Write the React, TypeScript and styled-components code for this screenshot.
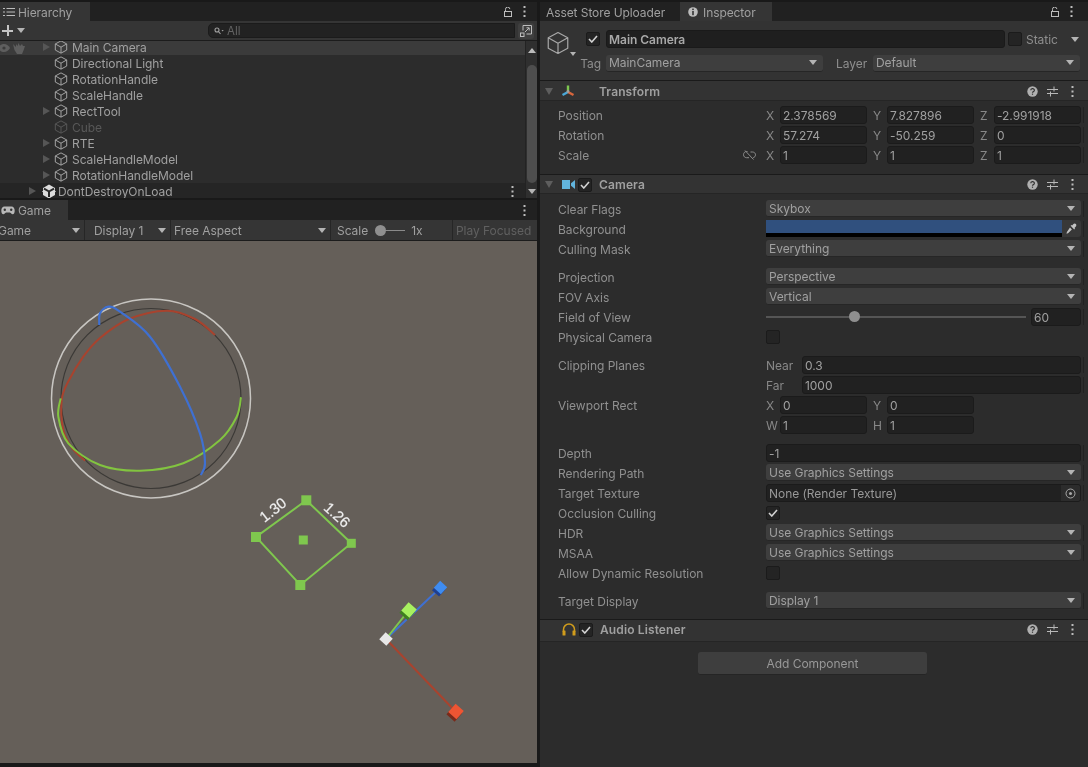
import React from 'react';
import styled, { createGlobalStyle } from 'styled-components';

const Global = createGlobalStyle`
  html, body { margin: 0; padding: 0; background: #191919; overflow: hidden; }
  * { box-sizing: border-box; }
`;

const Page = styled.div`
  width: 1088px; height: 767px; display: flex; background: #191919; filter: blur(0.3px);
  font-family: Inter, "Noto Sans", sans-serif; font-size: 12px; letter-spacing: -0.04px; color: #a0a0a0; overflow: hidden;
`;
const LeftCol = styled.div`width: 537px; height: 763px; margin-right: 3px; display: flex; flex-direction: column; flex: none;`;
const RightCol = styled.div`flex: 1; display: flex; flex-direction: column; min-width: 0;`;

const TabBar = styled.div<{ $first?: boolean }>`
  height: ${p => (p.$first ? 21 : 20)}px; background: #212121; display: flex; align-items: stretch; flex: none;
  ${p => p.$first && 'border-top: 2px solid #191919;'}
`;
const Tab = styled.div<{ $w: number; $on?: boolean; $pad?: number; $gap?: number }>`
  width: ${p => p.$w}px; padding: 1px 0 0 ${p => p.$pad ?? 3}px; display: flex; align-items: center; gap: ${p => p.$gap ?? 3}px;
  background: ${p => (p.$on ? '#353535' : 'transparent')};
  color: #a0a0a0; letter-spacing: -0.08px;
`;
const TabFill = styled.div`flex: 1;`;
const TabIcons = styled.div<{ $pad: number }>`display: flex; align-items: center; gap: 11px; padding-right: ${p => p.$pad}px;`;

const HierToolbar = styled.div`
  height: 20px; background: #353535; border-bottom: 1px solid #1c1c1c; display: flex; align-items: center; padding: 0 2px 0 2px; flex: none;
`;
const Plus = styled.span`width: 11px; height: 11px; margin-right: 4px; display: block; position: relative; flex: none;
  &::before { content: ''; position: absolute; left: 0; right: 0; top: 4.5px; height: 2px; background: #c4c4c4; }
  &::after { content: ''; position: absolute; top: 0; bottom: 0; left: 4.5px; width: 2px; background: #c4c4c4; }
`;
const Caret = styled.span<{ $c?: string; $w?: number }>`
  display: block; flex: none; width: 0; height: 0;
  border-left: ${p => p.$w ?? 4}px solid transparent; border-right: ${p => p.$w ?? 4}px solid transparent;
  border-top: ${p => (p.$w ?? 4) + 1}px solid ${p => p.$c ?? '#b4b4b4'};
`;
const SearchBox = styled.div`
  margin-left: 183px; width: 307px; height: 15px; background: #222222; border-radius: 5px 0 0 5px; border: 1px solid #1b1b1b;
  display: flex; align-items: center; padding-left: 5px; gap: 3px; color: #646464; font-size: 11.5px;
`;
const MaxBtn = styled.div`width: 16px; height: 16px; margin-left: 3px; background: #3f3f3f; border-radius: 3px; display: flex; align-items: center; justify-content: center;`;

const HierBody = styled.div`height: 157px; flex: none; display: flex; background: #2c2c2c; overflow: hidden;`;
const HierList = styled.div`flex: 1; display: flex; flex-direction: column; min-width: 0;`;
const HRow = styled.div<{ $sel?: boolean; $scene?: boolean; $h?: number }>`
  height: ${p => p.$h ?? 16}px; flex: none; display: flex; align-items: flex-end; padding-left: ${p => (p.$scene ? 29 : 43)}px;
  background: ${p => (p.$sel ? '#3b3b3b' : p.$scene ? '#252525' : 'transparent')};
  position: relative; color: #a0a0a0;
`;
const HInner = styled.div<{ $dim?: boolean }>`height: 16px; flex: 1; flex-shrink: 0; display: flex; align-items: center; ${p => p.$dim && 'color:#585858;'}`;
const FoldBox = styled.span<{ $w?: number }>`width: ${p => p.$w ?? 11}px; height: 16px; flex: none; display: flex; align-items: center;`;
const FoldTri = styled.span`width: 0; height: 0; border-top: 4.5px solid transparent; border-bottom: 4.5px solid transparent; border-left: 7px solid #565656;`;
const HIcon = styled.span<{ $w?: number }>`width: ${p => p.$w ?? 18}px; height: 16px; flex: none; display: flex; align-items: center;`;
const GutterIcons = styled.div`position: absolute; left: -2px; top: 0; height: 14px; display: flex; align-items: center; gap: 3px;`;
const RowDots = styled.div`margin-left: auto; margin-right: 11px; display: flex; align-items: center;`;
const ScrollBar = styled.div`width: 12px; flex: none; background: #2f2f2f; border-left: 1px solid #232323; display: flex; flex-direction: column; align-items: center; padding: 7px 0 4px 1px;`;
const Thumb = styled.div`width: 10px; flex: 1; margin: 12px 0 6px; background: #4e4e4e; border-radius: 5px;`;
const UpTri = styled.span`width: 0; height: 0; border-left: 4px solid transparent; border-right: 4px solid transparent; border-bottom: 5px solid #bcbcbc;`;
const Divider = styled.div`height: 2px; background: #191919; flex: none;`;

const GameToolbar = styled.div`height: 21px; flex: none; background: #353535; border-bottom: 1px solid #1c1c1c; display: flex; align-items: stretch; overflow: hidden;`;
const GameSeg = styled.div<{ $w: number; $pad?: number; $dim?: boolean; $last?: boolean }>`
  width: ${p => p.$w}px; flex: none; display: flex; align-items: center; padding: 0 4px 0 ${p => p.$pad ?? 4}px;
  ${p => !p.$last && 'border-right: 1px solid #262626;'} justify-content: space-between; white-space: nowrap;
  color: ${p => (p.$dim ? '#606060' : '#a0a0a0')};
`;
const GameClip = styled.span`margin-left: -2px;`;
const ScaleTrack = styled.span`width: 30px; height: 1px; background: #8a8a8a; margin: 0 6px 0 7px; position: relative; flex: none;`;
const ScaleKnob = styled.span`position: absolute; left: 0; top: -5px; width: 11px; height: 11px; border-radius: 50%; background: #8f8f8f;`;
const ScaleWrap = styled.div`display: flex; align-items: center;`;
const Viewport = styled.div`flex: 1; background: #655f59; min-height: 0; overflow: hidden;`;
const GizmoSvg = styled.svg`display: block; width: 537px; height: 522px;`;
const SvgLabel = styled.text`font-family: "Liberation Sans", sans-serif; font-size: 15px; letter-spacing: 0; fill: #f0f0f0; paint-order: stroke; stroke: rgba(240,240,240,0.45); stroke-width: 0.5px;`;

const InspectorBody = styled.div`flex: 1; background: #2c2c2c; display: flex; flex-direction: column; min-height: 0;`;
const ObjHeader = styled.div`
  background: #333333; height: 59px; padding-top: 9px; display: grid; grid-template-columns: 66px 1fr; grid-template-rows: 18px 17px; row-gap: 7px; align-items: center; flex: none;
`;
const BigIcon = styled.div`grid-column: 1; grid-row: 1 / span 2; align-self: start; margin: 1px 0 0 6px; position: relative; width: 28px; height: 28px;`;
const BigCaret = styled.span`position: absolute; left: 24px; top: 21px;`;
const HeadCell = styled.div<{ $row: number; $pr?: number }>`grid-column: 1; grid-row: ${p => p.$row}; display: flex; align-items: center; justify-content: flex-end; padding-right: ${p => p.$pr ?? 0}px; color: #8e8e8e;`;
const HeadFields = styled.div<{ $row: number }>`display: flex; align-items: center; grid-column: 2; grid-row: ${p => p.$row};`;
const NameField = styled.div`width: 399px; height: 18px; background: #1f1f1f; border: 1px solid #1a1a1a; border-radius: 3px; color: #a8a8a8; font-weight: 600; padding-left: 2px; display: flex; align-items: center;`;
const Check = styled.span<{ $ml?: number; $mr?: number }>`
  width: 14px; height: 14px; flex: none; border-radius: 2px; background: #242424; border: 1px solid #1b1b1b;
  display: flex; align-items: center; justify-content: center; margin-left: ${p => p.$ml ?? 0}px; margin-right: ${p => p.$mr ?? 0}px;
`;
const StaticLabel = styled.span`margin-left: 4px; width: 45px; color: #8e8e8e;`;
const Select = styled.div<{ $w?: number; $flex?: boolean }>`
  ${p => (p.$w ? `width:${p.$w}px;` : '')} ${p => (p.$flex ? 'flex:1;' : '')}
  height: 17px; margin-bottom: 1px; background: #3e3e3e; border-radius: 3px; border-bottom: 1px solid #262626; display: flex; align-items: center; justify-content: space-between;
  padding: 0 6px 0 3px; color: #a0a0a0; min-width: 0;
`;
const LayerLabel = styled.span`margin: 0 3px 0 13px; width: 34px; color: #8e8e8e;`;

const CompHeader = styled.div<{ $h?: number; $pt?: number; $pb?: number }>`
  height: ${p => p.$h ?? 21}px; flex: none; background: #333333; border-top: 1px solid #1a1a1a; border-bottom: 1px solid #252525; display: flex; align-items: center; padding: ${p => p.$pt ?? 0}px 14px ${p => p.$pb ?? 0}px 5px;
`;
const CompFold = styled.span`width: 0; height: 0; border-left: 4.5px solid transparent; border-right: 4.5px solid transparent; border-top: 7px solid #5e5e5e; margin-right: 9px; flex: none;`;
const FoldGap = styled.span`width: 18px; flex: none;`;
const CompIcon = styled.span`width: 14px; height: 14px; flex: none; display: flex; align-items: center; justify-content: center; margin-right: -2px; margin-left: -1px;`;
const CompSpacer = styled.span`width: 14px; flex: none; margin: 0 7px 0 5px;`;
const CompCheckWrap = styled.span`margin: 0 7px 0 5px; flex: none;`;
const CompTitle = styled.span`font-weight: 600; color: #a0a0a0; flex: 1; letter-spacing: 0.12px;`;
const CompTools = styled.span`display: flex; align-items: center; gap: 9px;`;
const ToolSlider = styled.span`display: flex; margin-right: 4px;`;

const Section = styled.div<{ $pt?: number; $pb?: number }>`padding: ${p => p.$pt ?? 5}px 0 ${p => p.$pb ?? 8}px; flex: none;`;
const Row = styled.div<{ $gap?: boolean; $plain?: boolean }>`
  height: 20px; display: grid; grid-template-columns: 208px 315px; padding-left: 18px; align-items: center; position: relative; margin-top: ${p => (p.$gap ? 8 : 0)}px;
  ${p => !p.$plain && `&::after { content: ''; position: absolute; left: 543px; top: 2px; bottom: 2px; width: 1px; background: #222222; }`}
`;
const Label = styled.div`display: flex; justify-content: space-between; align-items: center; padding-right: 10px; color: #909090;`;
const Vec = styled.div`display: grid; grid-template-columns: repeat(3, 1fr); gap: 6px;`;
const Axis = styled.div<{ $lw?: number }>`display: grid; grid-template-columns: ${p => p.$lw ?? 14}px 1fr; align-items: center; color: #888888;`;
const Num = styled.div`height: 18px; background: #212121; border: 1px solid #1b1b1b; border-radius: 3px; padding-left: 2px; display: flex; align-items: center; color: #a0a0a0; min-width: 0; overflow: hidden; white-space: nowrap;`;
const ColorField = styled.div`height: 17px; display: flex; margin-top: -1px;`;
const Swatch = styled.div`flex: 1; background: #000; display: flex; flex-direction: column;`;
const SwatchFill = styled.div`height: 13px; background: #30507e;`;
const PickBtn = styled.div`width: 19px; background: #383838; display: flex; align-items: center; justify-content: center; flex: none; border-radius: 0 3px 3px 0;`;
const ObjField = styled.div`height: 18px; display: flex; background: #212121; border-radius: 3px; border: 1px solid #1b1b1b; padding-left: 2px; align-items: center; justify-content: space-between; color: #989898; overflow: hidden;`;
const ObjPick = styled.div`width: 19px; height: 16px; background: #2c2c2c; display: flex; align-items: center; justify-content: center;`;
const SliderRow = styled.div`display: flex; align-items: center; gap: 5px;`;
const SliderTrack = styled.div`flex: 1; height: 2px; background: #555555; position: relative;`;
const SliderKnob = styled.span`position: absolute; left: 83px; top: -5px; width: 11px; height: 11px; border-radius: 50%; background: #8f8f8f;`;
const SliderNum = styled(Num)`width: 50px; flex: none;`;
const AddWrap = styled.div`display: flex; justify-content: flex-start; padding: 10px 0 0 158px; flex: none;`;
const AddBtn = styled.div`width: 229px; height: 23px; background: #3e3e3e; border-radius: 3px; border-bottom: 1px solid #252525; display: flex; align-items: center; justify-content: center; color: #989898;`;

/* icons */
const Cube = ({ size = 14, c = '#a8a8a8' }: { size?: number; c?: string }) => (
  <svg width={size} height={size} viewBox="0 0 16 16" fill="none" stroke={c} strokeWidth={size > 16 ? 0.8 : 1.1} strokeLinejoin="round">
    <path d="M8 1 L14.5 4.5 V11.5 L8 15 L1.5 11.5 V4.5 Z M1.5 4.5 L8 8.2 L14.5 4.5 M8 8.2 V15" />
  </svg>
);
const UnityLogo = () => (
  <svg width="14" height="15" viewBox="0 0 14 15">
    <path d="M7 .5 13 4v7l-6 3.5L1 11V4z" fill="#dcdcdc" />
    <path d="M7 7.5V13M7 7.5 2 4.6M7 7.5l5-2.9" stroke="#2a2a2a" strokeWidth="2" fill="none" />
    <path d="M0 7.5 2 6v3zM14 7.5 12 6v3z" fill="#dcdcdc" />
  </svg>
);
const Dots = ({ c = '#bdbdbd' }: { c?: string }) => (
  <svg width="3" height="11" viewBox="0 0 3 11" fill={c}>
    <rect x=".5" y="0" width="2" height="2" /><rect x=".5" y="4.5" width="2" height="2" /><rect x=".5" y="9" width="2" height="2" />
  </svg>
);
const Lock = () => (
  <svg width="8" height="10" viewBox="0 0 8 10" fill="none" stroke="#bdbdbd" strokeWidth="1">
    <rect x=".5" y="4.5" width="7" height="5" /><path d="M1.5 4.5V2.500a2.200 2.200 0 0 1 4.400 -.4" />
  </svg>
);
const ListIcon = () => (
  <svg width="12" height="10" viewBox="0 0 12 10" fill="none" stroke="#bdbdbd">
    <path d="M3.5 1.500H12M3.5 5H12M3.5 8.500H12" /><path d="M0 1.500h2M0 5h2M0 8.500h2" />
  </svg>
);
const Tick = () => (
  <svg width="10" height="8" viewBox="0 0 10 8" fill="none" stroke="#d2d2d2" strokeWidth="1.6"><path d="M1 4l2.800 3L9 1" /></svg>
);
const Help = () => (
  <svg width="11" height="11" viewBox="0 0 11 11">
    <circle cx="5.500" cy="5.500" r="5.200" fill="#b0b0b0" />
    <path d="M3.800 4.200a1.800 1.600 0 1 1 2.600 1.400c-.6.300-.9.500-.9 1.100" stroke="#333" strokeWidth="1.2" fill="none" />
    <rect x="4.900" y="7.600" width="1.2" height="1.2" fill="#333" />
  </svg>
);
const SliderIcon = () => (
  <svg width="11" height="11" viewBox="0 0 11 11" stroke="#b8b8b8" strokeWidth="1" fill="none">
    <path d="M0 3.500h11M0 7.500h11M7 .5v5M3.500 5.500v5" />
  </svg>
);
const Tools = () => (
  <CompTools><Help /><ToolSlider><SliderIcon /></ToolSlider><Dots /></CompTools>
);
const GamePad = () => (
  <svg width="14" height="9" viewBox="0 0 14 9">
    <path d="M3.500.5h7c2 0 3.200 1.800 3.200 4.200 0 1.800-.7 3.500-2 3.500-1.400 0-2-1.700-3-1.700H5.300c-1 0-1.600 1.700-3 1.700-1.300 0-2-1.700-2-3.500C.3 2.300 1.500.5 3.500.5z" fill="#b8b8b8" />
    <circle cx="3.800" cy="3.800" r="1.200" fill="#333" /><circle cx="10.200" cy="3.800" r="1.200" fill="#333" />
  </svg>
);
const Info = () => (
  <svg width="10" height="10" viewBox="0 0 10 10">
    <circle cx="5" cy="5" r="4.800" fill="#bdbdbd" />
    <rect x="4.200" y="1.600" width="1.600" height="1.500" fill="#333" /><rect x="4.200" y="4" width="1.600" height="4.200" fill="#333" />
  </svg>
);
const SearchGlyph = () => (
  <svg width="10" height="8" viewBox="0 0 10 8" fill="none" stroke="#a0a0a0" strokeWidth="1.1">
    <circle cx="3" cy="3" r="2" /><path d="M4.500 4.500 6.500 7" /><path d="M7.500 3h2.200l-1.100 1.400z" fill="#a0a0a0" stroke="none" />
  </svg>
);
const MaxGlyph = () => (
  <svg width="12" height="12" viewBox="0 0 12 12" fill="none" stroke="#bdbdbd" strokeWidth="1">
    <path d="M3 5.500V.5h8.500V9H6.500" /><rect x=".5" y="8" width="3.500" height="3.500" /><path d="M5 7l4-4M6.500 2.800H9.200V5.500" />
  </svg>
);
const EyeGlyph = () => (
  <svg width="12" height="8" viewBox="0 0 12 8"><path d="M0 4c1.500-2.600 3.600-4 6-4s4.500 1.400 6 4c-1.500 2.600-3.600 4-6 4S1.500 6.600 0 4z" fill="#5e5e5e" /><circle cx="6" cy="4" r="1.600" fill="#3b3b3b" /></svg>
);
const HandGlyph = () => (
  <svg width="12" height="11" viewBox="0 0 12 11"><path d="M0 1l3 3 0-3 1.500 2L5.500 0 7 3l2-2 1 2 2 0-1.500 4.500L9 11H4L1.500 7z" fill="#5e5e5e" /></svg>
);
const TransformIcon = () => (
  <svg width="14" height="14" viewBox="0 0 14 14" fill="none" strokeWidth="2.4">
    <path d="M7 7V1.500" stroke="#7ec850" /><path d="M7 8 1.500 11" stroke="#4aa8d8" /><path d="M7 8l5.500 3" stroke="#d8663c" />
    <circle cx="7" cy="7.500" r="1.400" fill="#a0a0a0" stroke="none" />
  </svg>
);
const CameraIcon = () => (
  <svg width="13" height="9" viewBox="0 0 13 9" fill="#62b4dc"><rect width="8" height="9" /><path d="M9 3.300 13 0v9L9 5.700z" /></svg>
);
const Headphones = () => (
  <svg width="14" height="13" viewBox="0 0 14 13" fill="none">
    <path d="M1.500 9V6.500a5.500 5.500 0 0 1 11 0V9" stroke="#d09c1c" strokeWidth="1.5" />
    <rect x=".5" y="7.500" width="3" height="5" rx=".5" fill="#d09c1c" /><rect x="10.500" y="7.500" width="3" height="5" rx=".5" fill="#d09c1c" />
  </svg>
);
const Dropper = () => (
  <svg width="11" height="11" viewBox="0 0 11 11"><path d="M7 1.500c1-1.200 2.200-1.200 2.900-.4s.6 1.900-.5 2.900L8.500 4.900l.6.600-.9.900-3.600-3.600.9-.9.600.600zM4 4.500 5.900 6.400 2 10.300 0.500 10.700 0.900 9z" fill="#c4c4c4" /></svg>
);
const Target = () => (
  <svg width="11" height="11" viewBox="0 0 11 11" fill="none"><circle cx="5.500" cy="5.500" r="4.500" stroke="#a8a8a8" /><circle cx="5.500" cy="5.500" r="1.500" fill="#a8a8a8" /></svg>
);
const Unlink = () => (
  <svg width="13" height="10" viewBox="0 0 13 10" fill="none" stroke="#8e8e8e" strokeWidth="1">
    <path d="M4.500 1.500H3.500C1.800 1.500.5 3 .5 4.700s1.300 3 3 3H6M7.500 2h2c1.700 0 3 1.200 3 2.800 0 1.400-1 2.600-2.300 2.900" /><path d="M2 .5 10.500 9.500" />
  </svg>
);

/* gizmo drawing helpers */
type P = [number, number];
const smooth = (pts: P[]) => {
  let d = `M${pts[0][0]} ${pts[0][1]}`;
  for (let i = 0; i < pts.length - 1; i++) {
    const p0 = pts[Math.max(i - 1, 0)], p1 = pts[i], p2 = pts[i + 1], p3 = pts[Math.min(i + 2, pts.length - 1)];
    const c1 = [p1[0] + (p2[0] - p0[0]) / 6, p1[1] + (p2[1] - p0[1]) / 6];
    const c2 = [p2[0] - (p3[0] - p1[0]) / 6, p2[1] - (p3[1] - p1[1]) / 6];
    d += ` C${c1[0].toFixed(1)} ${c1[1].toFixed(1)} ${c2[0].toFixed(1)} ${c2[1].toFixed(1)} ${p2[0]} ${p2[1]}`;
  }
  return d;
};
const RED: P[] = [[215, 335], [195, 319], [166.7, 310.7], [128.3, 319.3], [100, 338], [83.3, 356.7], [68, 382], [61.7, 400], [63.3, 430], [72, 448], [85, 460.7]];
const BLUE: P[] = [[99.3, 325], [100, 313.3], [108.3, 306.7], [120, 311.7], [150, 336.7], [180, 386.7], [200, 433.3], [205, 463.3], [200.7, 475]];
const GREEN: P[] = [[60.7, 398.3], [58.3, 416.7], [68.3, 443.3], [100, 465], [140, 470.7], [183.3, 463.3], [220, 440], [236.7, 416.7], [241, 397.3]];

const Handle = ({ x, y, s = 9 }: { x: number; y: number; s?: number }) => (
  <rect x={x - s / 2} y={y - s / 2} width={s} height={s} fill="#7fc74e" />
);
const Box = ({ x, y, s, top, side }: { x: number; y: number; s: number; top: string; side: string }) => (
  <g>
    <rect x={-s / 2} y={-s / 2} width={s} height={s} fill={side} transform={`translate(${x - 1.8} ${y + 2.4}) rotate(42)`} />
    <rect x={-s / 2} y={-s / 2} width={s} height={s} fill={top} transform={`translate(${x} ${y}) rotate(42)`} />
  </g>
);

const Gizmos = () => (
  <GizmoSvg viewBox="0 241 537 522">
    <circle cx="151" cy="398.5" r="99.5" fill="none" stroke="#c8c6c2" strokeWidth="1.5" />
    <circle cx="151" cy="398.5" r="90" fill="none" stroke="#3b3936" strokeWidth="1.2" />
    <path d={smooth(RED)} fill="none" stroke="#a8432e" strokeWidth="2" />
    <path d={smooth(GREEN)} fill="none" stroke="#82c440" strokeWidth="2" />
    <path d={smooth(BLUE)} fill="none" stroke="#3f70d2" strokeWidth="2.2" />

    <path d="M306.3 500.3 351.3 543.3 300.3 585 256 537Z" fill="none" stroke="#7fc74e" strokeWidth="2" />
    <Handle x={306.3} y={500.3} s={10} />
    <Handle x={351.3} y={543.3} s={9} />
    <Handle x={300.3} y={585} s={10} />
    <Handle x={256} y={537} s={10} />
    <Handle x={303.3} y={540} s={9} />
    <SvgLabel x="273" y="515" textAnchor="middle" transform="rotate(-38 273 510)">1.30</SvgLabel>
    <SvgLabel x="337" y="520" textAnchor="middle" transform="rotate(42 337 515)">1.26</SvgLabel>

    <path d="M386 639 440 588" stroke="#3f70d2" strokeWidth="2" />
    <path d="M386 639 409 610" stroke="#7fc74e" strokeWidth="2" />
    <path d="M386 639 456 712" stroke="#a8432e" strokeWidth="2" />
    <Box x={440.5} y={587.5} s={9.5} top="#3f8cf0" side="#1f3f90" />
    <Box x={409} y={610} s={11} top="#a8f060" side="#3f8020" />
    <Box x={456} y={711.5} s={11} top="#ee5533" side="#7a2a1a" />
    <g transform="translate(386 639) rotate(42)"><rect x="-4.8" y="-4.8" width="9.6" height="9.6" fill="#e8e8e8" /></g>
  </GizmoSvg>
);

const hierarchy: { name: string; fold?: boolean; dim?: boolean }[] = [
  { name: 'Directional Light' },
  { name: 'RotationHandle' },
  { name: 'ScaleHandle' },
  { name: 'RectTool', fold: true },
  { name: 'Cube', dim: true },
  { name: 'RTE', fold: true },
  { name: 'ScaleHandleModel', fold: true },
  { name: 'RotationHandleModel', fold: true },
];

const Drop = ({ children, ...rest }: { children: React.ReactNode; $w?: number; $flex?: boolean }) => (
  <Select {...rest}>{children}<Caret /></Select>
);
const FieldRow = ({ label, children, gap, plain }: { label: string; children: React.ReactNode; gap?: boolean; plain?: boolean }) => (
  <Row $gap={gap} $plain={plain}><Label>{label}</Label><div>{children}</div></Row>
);
const VecRow = ({ label, vals, extra }: { label: string; vals: [string, string][]; extra?: React.ReactNode }) => (
  <Row>
    <Label>{label}{extra}</Label>
    <Vec>{vals.map(([a, v]) => <Axis key={a}><span>{a}</span><Num>{v}</Num></Axis>)}</Vec>
  </Row>
);

export default function App() {
  return (
    <Page>
      <Global />
      <LeftCol>
        <TabBar $first>
          <Tab $w={90} $on><ListIcon />Hierarchy</Tab>
          <TabFill />
          <TabIcons $pad={11}><Lock /><Dots /></TabIcons>
        </TabBar>
        <HierToolbar>
          <Plus /><Caret $w={4} />
          <SearchBox><SearchGlyph />All</SearchBox>
          <MaxBtn><MaxGlyph /></MaxBtn>
        </HierToolbar>
        <HierBody>
          <HierList>
            <HRow $sel $h={14}>
              <GutterIcons><EyeGlyph /><HandGlyph /></GutterIcons>
              <HInner><FoldBox><FoldTri /></FoldBox><HIcon><Cube /></HIcon>Main Camera</HInner>
            </HRow>
            {hierarchy.map(r => (
              <HRow key={r.name}>
                <HInner $dim={r.dim}>
                  <FoldBox>{r.fold && <FoldTri />}</FoldBox>
                  <HIcon><Cube c={r.dim ? '#585858' : undefined} /></HIcon>{r.name}
                </HInner>
              </HRow>
            ))}
            <HRow $scene>
              <HInner>
                <FoldBox $w={13}><FoldTri /></FoldBox>
                <HIcon $w={16}><UnityLogo /></HIcon>DontDestroyOnLoad
                <RowDots><Dots /></RowDots>
              </HInner>
            </HRow>
          </HierList>
          <ScrollBar><UpTri /><Thumb /><Caret /></ScrollBar>
        </HierBody>
        <Divider />
        <TabBar>
          <Tab $w={68} $on $pad={1}><GamePad />Game</Tab>
          <TabFill />
          <TabIcons $pad={11}><Dots /></TabIcons>
        </TabBar>
        <GameToolbar>
          <GameSeg $w={85} $pad={0}><GameClip>Game</GameClip><Caret /></GameSeg>
          <GameSeg $w={86} $pad={9}>Display 1<Caret /></GameSeg>
          <GameSeg $w={160} $pad={3}>Free Aspect<Caret /></GameSeg>
          <GameSeg $w={122} $pad={6}><ScaleWrap>Scale<ScaleTrack><ScaleKnob /></ScaleTrack>1x</ScaleWrap></GameSeg>
          <GameSeg $w={84} $pad={3} $dim $last>Play Focused</GameSeg>
        </GameToolbar>
        <Viewport><Gizmos /></Viewport>
      </LeftCol>

      <RightCol>
        <TabBar $first>
          <Tab $w={140} $pad={6}>Asset Store Uploader</Tab>
          <Tab $w={92} $on $pad={8} $gap={5}><Info />Inspector</Tab>
          <TabFill />
          <TabIcons $pad={15}><Lock /><Dots /></TabIcons>
        </TabBar>
        <InspectorBody>
          <ObjHeader>
            <BigIcon><Cube size={24} /><BigCaret><Caret $w={3} /></BigCaret></BigIcon>
            <HeadCell $row={1} $pr={6}><Check><Tick /></Check></HeadCell>
            <HeadFields $row={1}>
              <NameField>Main Camera</NameField>
              <Check $ml={3} />
              <StaticLabel>Static</StaticLabel>
              <Caret />
            </HeadFields>
            <HeadCell $row={2} $pr={5}>Tag</HeadCell>
            <HeadFields $row={2}>
              <Drop $w={217}>MainCamera</Drop>
              <LayerLabel>Layer</LayerLabel>
              <Drop $w={207}>Default</Drop>
            </HeadFields>
          </ObjHeader>

          <CompHeader $pt={1}>
            <CompFold /><CompIcon><TransformIcon /></CompIcon><CompSpacer /><CompTitle>Transform</CompTitle><Tools />
          </CompHeader>
          <Section $pt={4} $pb={9}>
            <VecRow label="Position" vals={[['X', '2.378569'], ['Y', '7.827896'], ['Z', '-2.991918']]} />
            <VecRow label="Rotation" vals={[['X', '57.274'], ['Y', '-50.259'], ['Z', '0']]} />
            <VecRow label="Scale" extra={<Unlink />} vals={[['X', '1'], ['Y', '1'], ['Z', '1']]} />
          </Section>

          <CompHeader $h={20} $pt={1}>
            <CompFold /><CompIcon><CameraIcon /></CompIcon><CompCheckWrap><Check><Tick /></Check></CompCheckWrap><CompTitle>Camera</CompTitle><Tools />
          </CompHeader>
          <Section>
            <FieldRow label="Clear Flags"><Drop>Skybox</Drop></FieldRow>
            <FieldRow label="Background">
              <ColorField><Swatch><SwatchFill /></Swatch><PickBtn><Dropper /></PickBtn></ColorField>
            </FieldRow>
            <FieldRow label="Culling Mask"><Drop>Everything</Drop></FieldRow>
            <FieldRow label="Projection" gap><Drop>Perspective</Drop></FieldRow>
            <FieldRow label="FOV Axis"><Drop>Vertical</Drop></FieldRow>
            <FieldRow label="Field of View">
              <SliderRow><SliderTrack><SliderKnob /></SliderTrack><SliderNum>60</SliderNum></SliderRow>
            </FieldRow>
            <FieldRow label="Physical Camera" plain><Check /></FieldRow>
            <FieldRow label="Clipping Planes" gap><Axis $lw={36}><span>Near</span><Num>0.3</Num></Axis></FieldRow>
            <FieldRow label=""><Axis $lw={36}><span>Far</span><Num>1000</Num></Axis></FieldRow>
            <Row $plain><Label>Viewport Rect</Label><Vec><Axis><span>X</span><Num>0</Num></Axis><Axis><span>Y</span><Num>0</Num></Axis></Vec></Row>
            <Row $plain><Label /><Vec><Axis><span>W</span><Num>1</Num></Axis><Axis><span>H</span><Num>1</Num></Axis></Vec></Row>
            <FieldRow label="Depth" gap><Num>-1</Num></FieldRow>
            <FieldRow label="Rendering Path"><Drop>Use Graphics Settings</Drop></FieldRow>
            <FieldRow label="Target Texture"><ObjField>None (Render Texture)<ObjPick><Target /></ObjPick></ObjField></FieldRow>
            <FieldRow label="Occlusion Culling" plain><Check><Tick /></Check></FieldRow>
            <FieldRow label="HDR"><Drop>Use Graphics Settings</Drop></FieldRow>
            <FieldRow label="MSAA"><Drop>Use Graphics Settings</Drop></FieldRow>
            <FieldRow label="Allow Dynamic Resolution" plain><Check /></FieldRow>
            <FieldRow label="Target Display" gap><Drop>Display 1</Drop></FieldRow>
          </Section>

          <CompHeader $h={23} $pb={2}>
            <FoldGap /><CompIcon><Headphones /></CompIcon><CompCheckWrap><Check><Tick /></Check></CompCheckWrap><CompTitle>Audio Listener</CompTitle><Tools />
          </CompHeader>
          <AddWrap><AddBtn>Add Component</AddBtn></AddWrap>
        </InspectorBody>
      </RightCol>
    </Page>
  );
}
